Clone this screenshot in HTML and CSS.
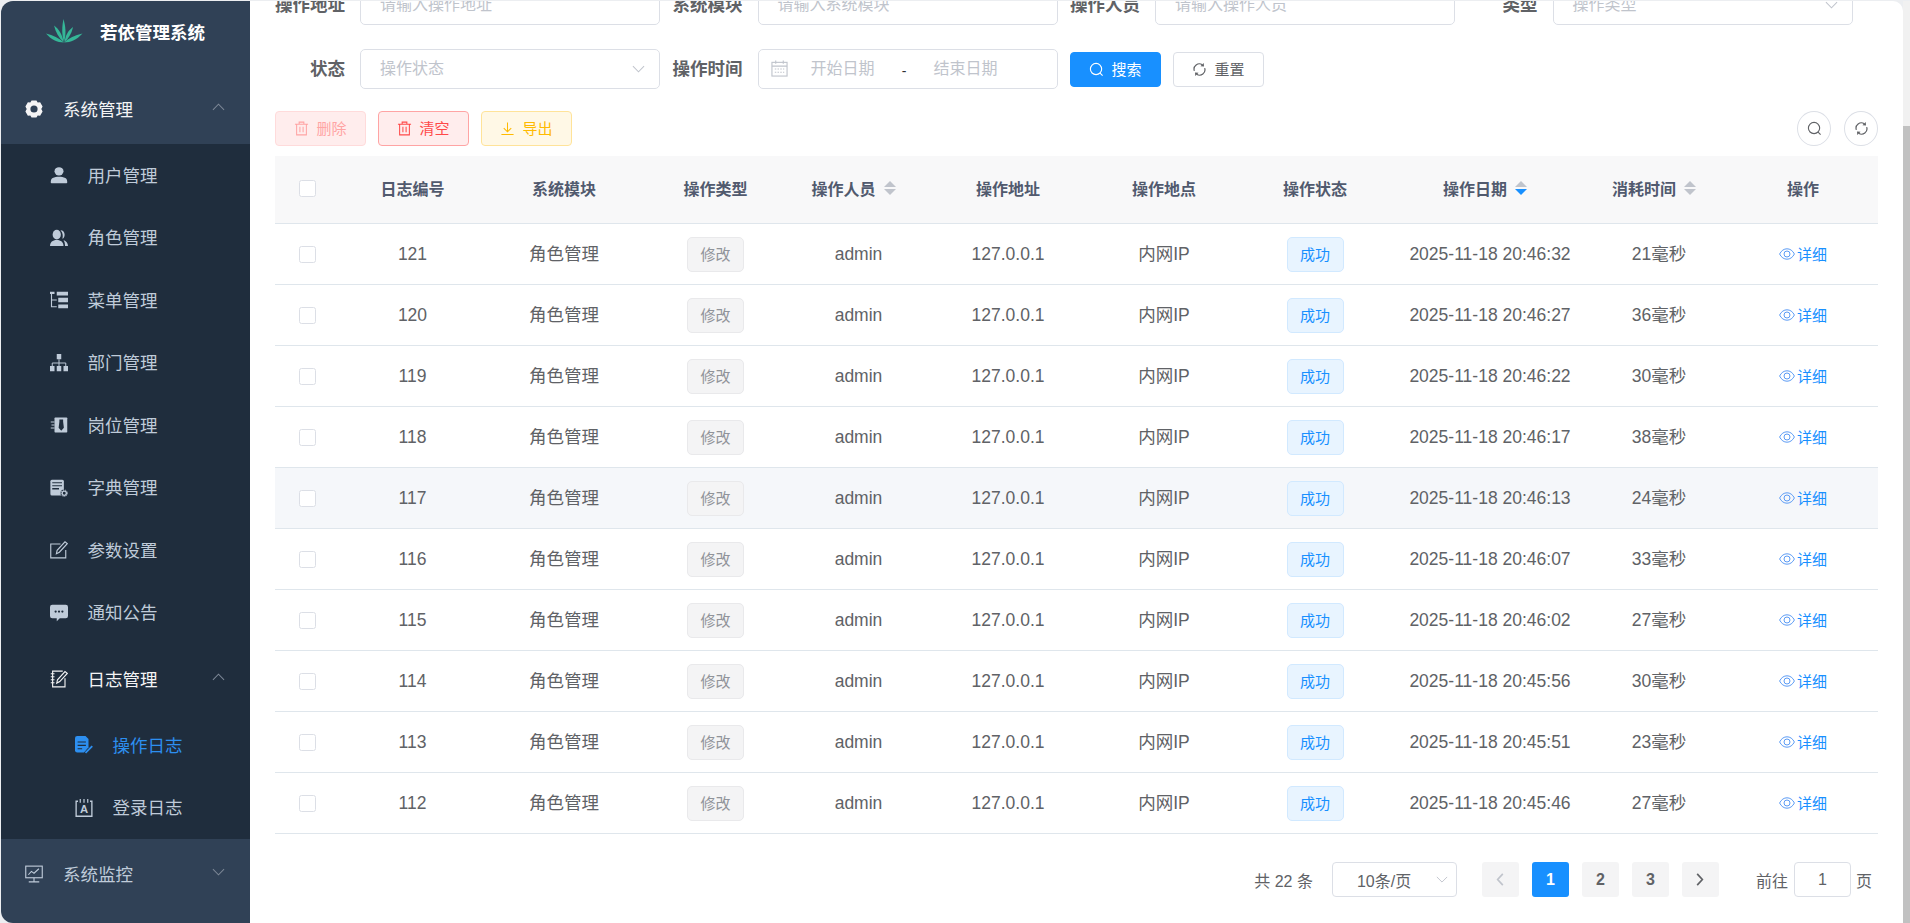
FILE: index.html
```html
<!DOCTYPE html>
<html lang="zh-CN">
<head>
<meta charset="utf-8">
<title>操作日志</title>
<link rel="stylesheet" href="styles.css">
</head>
<body>
<svg class="defs" aria-hidden="true">
  <symbol id="i-gear" viewBox="1 1 22 22"><path fill="currentColor" fill-rule="evenodd" d="M9 1.500h6l1.500 2.600 3-.2 3 5.100-1.600 3 1.600 3-3 5.100-3-.2L15 22.500H9l-1.500-2.600-3 .2-3-5.100 1.600-3-1.600-3 3-5.100 3 .2zM12 7.600a4.400 4.400 0 1 0 0 8.800a4.400 4.400 0 0 0 0-8.800z"/></symbol>
  <symbol id="i-user" viewBox="0 0 24 24"><g fill="currentColor"><ellipse cx="12" cy="7" rx="6" ry="5.500"/><path d="M1 22c0-3 .5-5 2.500-6 2.500-1.300 5.500-1.800 8.500-1.800s6 .5 8.500 1.800c2 1 2.500 3 2.500 6 0 .5-.5 1-1 1H2c-.5 0-1-.5-1-1z"/></g></symbol>
  <symbol id="i-peoples" viewBox="0 0 24 24"><g fill="currentColor"><ellipse cx="9" cy="7.500" rx="5.500" ry="6.500"/><path d="M0 22.500c0-5 3.500-8 9-8s9 3 9 8z"/><path d="M14 1.500c3.500 0 5.500 2.700 5.500 6 0 2.500-1 4.500-3 5.500 1-3.500.8-8.500-2.500-11.500zM18 14.500c3.500 1.500 6 3.800 6 8h-4c0-3-.5-5.500-2-8z"/></g></symbol>
  <symbol id="i-treetable" viewBox="0 0 24 24"><g fill="currentColor"><rect x="0" y="1" width="6" height="3"/><rect x="9" y="1" width="15" height="5"/><rect x="11" y="9" width="13" height="6"/><rect x="11" y="18" width="13" height="5"/></g><path d="M2 4v17h7M2 12h7" fill="none" stroke="currentColor" stroke-width="1.500"/></symbol>
  <symbol id="i-tree" viewBox="0 0 24 24"><g fill="currentColor"><rect x="9" y="0" width="6" height="7"/><rect x="0" y="16" width="6" height="7"/><rect x="9" y="16" width="6" height="7"/><rect x="18" y="16" width="6" height="7"/></g><path d="M12 7v9M3 16v-4h18v4" fill="none" stroke="currentColor" stroke-width="1.300"/></symbol>
  <symbol id="i-post" viewBox="0 0 24 24"><rect x="6" y="2" width="17" height="20" rx="1" fill="currentColor"/><path d="M12.500 4.500h5v3l1 8-3.500 4-3.500-4 1-8z" fill="#1f2d3d"/><path d="M1 8h5M2 12h4M1 16h5" stroke="currentColor" stroke-width="1.500"/></symbol>
  <symbol id="i-dict" viewBox="0 0 24 24"><rect x="0.500" y="1" width="18" height="21" rx="2" fill="currentColor"/><path d="M3 5h13M3 9h13" stroke="#1f2d3d" stroke-width="1.300"/><path d="M3 13h9" stroke="#1f2d3d" stroke-width="2"/><circle cx="19" cy="19" r="5" fill="#1f2d3d"/><circle cx="19" cy="19" r="2.800" fill="none" stroke="currentColor" stroke-width="1.800"/><circle cx="19" cy="19" r="4.300" fill="none" stroke="currentColor" stroke-width="1.300" stroke-dasharray="1.500 1.500"/></symbol>
  <symbol id="i-edit" viewBox="0 0 24 24"><path d="M21 12v10.500H1V4h13" fill="none" stroke="currentColor" stroke-width="1.500"/><path d="M8.500 17l1-4.500L20 1l3 2.500-10.500 11.500z" fill="none" stroke="currentColor" stroke-width="1.500"/></symbol>
  <symbol id="i-message" viewBox="0 0 24 24"><path fill="currentColor" d="M3 1h18a3 3 0 0 1 3 3v12a3 3 0 0 1-3 3h-8l-4 4v-4H3a3 3 0 0 1-3-3V4a3 3 0 0 1 3-3z"/><g fill="#1f2d3d"><circle cx="7.500" cy="10" r="1.500"/><circle cx="12" cy="10" r="1.500"/><circle cx="16.500" cy="10" r="1.500"/></g></symbol>
  <symbol id="i-log" viewBox="0 0 24 24"><path d="M20 11v11.500H3.500V1.500H17" fill="none" stroke="currentColor" stroke-width="1.500"/><path d="M1 5h5M1 9h5M1 13h5M1 17h5" stroke="currentColor" stroke-width="1.300"/><path d="M9 17.500l1-4.500L20 2l3 2.500L13 15.500z" fill="none" stroke="currentColor" stroke-width="1.500"/></symbol>
  <symbol id="i-form" viewBox="0 0 24 24"><path fill="currentColor" d="M3 0h11l4 4v11l-6 7H3a3 3 0 0 1-3-3V3a3 3 0 0 1 3-3z"/><path d="M3.500 8h11M3.500 12.500h11M3.500 17h6" stroke="#1f2d3d" stroke-width="1.600"/><path d="M14 22.500l9-9" stroke="currentColor" stroke-width="2.400"/></symbol>
  <symbol id="i-login" viewBox="0 0 24 24"><path d="M4 3H1.500v20h21V3H20" fill="none" stroke="currentColor" stroke-width="1.800"/><path d="M7 0v5M12 0v5M17 0v5" stroke="currentColor" stroke-width="1.600"/><text x="12" y="19" text-anchor="middle" font-size="15" font-weight="700" font-family="Liberation Sans" fill="currentColor">A</text></symbol>
  <symbol id="i-monitor" viewBox="0 0 24 24"><rect x="1" y="1.500" width="22" height="15.500" fill="none" stroke="currentColor" stroke-width="1.500"/><path d="M4.500 13l4-4.500 3.500 2.500 6.500-6" fill="none" stroke="currentColor" stroke-width="1.400"/><path d="M12 17v5M5 22.500h14" stroke="currentColor" stroke-width="1.500"/></symbol>
  <symbol id="i-up" viewBox="0 0 14 8"><path d="M1 7l6-6 6 6" fill="none" stroke="currentColor" stroke-width="1.100"/></symbol>
  <symbol id="i-down" viewBox="0 0 14 8"><path d="M1 1l6 6 6-6" fill="none" stroke="currentColor" stroke-width="1.100"/></symbol>
  <symbol id="i-search" viewBox="0 0 16 16"><circle cx="7.500" cy="7.500" r="6" fill="none" stroke="currentColor" stroke-width="1.200"/><path d="M11.800 11.800l2.700 2.700" stroke="currentColor" stroke-width="1.200"/></symbol>
  <symbol id="i-refresh" viewBox="0 0 16 16"><g fill="none" stroke="currentColor" stroke-width="1.300"><path d="M2.500 9.500A5.700 5.700 0 0 1 11 2.900"/><path d="M13.500 6.500A5.700 5.700 0 0 1 5 13.100"/></g><path d="M12.500 1l.3 3.800-3.800-.2zM3.500 15l-.3-3.800 3.800.2z" fill="currentColor"/></symbol>
  <symbol id="i-trash" viewBox="0 0 16 16"><g fill="none" stroke="currentColor" stroke-width="1.100"><path d="M1 3.500h14M5.500 3.500V1.200h5v2.300M2.800 3.500v11.300h10.400V3.500M6.300 6v6M9.700 6v6"/></g></symbol>
  <symbol id="i-download" viewBox="0 0 16 16"><path d="M1.500 14.500h13M8 1.500v9.500M4 7.500l4 4 4-4" fill="none" stroke="currentColor" stroke-width="1.100"/></symbol>
  <symbol id="i-calendar" viewBox="0 0 18 18"><g fill="none" stroke="currentColor" stroke-width="1.200"><rect x="1" y="2.500" width="16" height="14.500"/><path d="M1 6.500h16M5 0.500v3.500M13 0.500v3.500"/></g><path d="M4 9.500h10M4 13h10" stroke="currentColor" stroke-width="1.200" stroke-dasharray="1.600 1.300"/></symbol>
  <symbol id="i-eye" viewBox="0 0 16 14"><g fill="none" stroke="currentColor" stroke-width="1"><path d="M.6 7C2.400 3.500 5 1.800 8 1.800S13.600 3.500 15.400 7c-1.800 3.500-4.400 5.200-7.400 5.200S2.400 10.500.6 7z"/><circle cx="8" cy="7" r="3"/></g></symbol>
  <symbol id="i-left" viewBox="0 0 10 16"><path d="M8 2L2.500 8 8 14" fill="none" stroke="currentColor" stroke-width="1.800"/></symbol>
  <symbol id="i-right" viewBox="0 0 10 16"><path d="M2 2l5.500 6L2 14" fill="none" stroke="currentColor" stroke-width="1.800"/></symbol>
  <symbol id="i-logo" viewBox="0 0 37 24"><g fill="#35b697"><path d="M18 23C15.500 15 16 7 17.500 0c2 7 3 15 .5 23z"/><path d="M17.500 23C13 19 9.500 13 8 6.500 13 10 16.500 16 17.500 23z"/><path d="M18.500 23c3.500-3 7-8 8.500-15-5 3.500-7.500 8.500-8.500 15z"/><path d="M18 23.500C11 23.500 5 20.500 0 14.500c7 2 13 4.500 18 9z"/><path d="M18 23.500c7 0 13-3 18.500-9-7.500 2-14 4.500-18.500 9z"/></g></symbol>
</svg>

<div class="app">
  <aside class="sidebar">
    <div class="logo">
      <svg class="logo-icon"><use href="#i-logo"/></svg>
      <span class="logo-text">若依管理系统</span>
    </div>
    <nav class="menu">
      <div class="menu-item top open"><svg class="mi"><use href="#i-gear"/></svg><span>系统管理</span><svg class="arrow"><use href="#i-up"/></svg></div>
      <div class="submenu">
        <div class="menu-item"><svg class="mi"><use href="#i-user"/></svg><span>用户管理</span></div>
        <div class="menu-item"><svg class="mi"><use href="#i-peoples"/></svg><span>角色管理</span></div>
        <div class="menu-item"><svg class="mi"><use href="#i-treetable"/></svg><span>菜单管理</span></div>
        <div class="menu-item"><svg class="mi"><use href="#i-tree"/></svg><span>部门管理</span></div>
        <div class="menu-item"><svg class="mi"><use href="#i-post"/></svg><span>岗位管理</span></div>
        <div class="menu-item"><svg class="mi"><use href="#i-dict"/></svg><span>字典管理</span></div>
        <div class="menu-item"><svg class="mi"><use href="#i-edit"/></svg><span>参数设置</span></div>
        <div class="menu-item"><svg class="mi"><use href="#i-message"/></svg><span>通知公告</span></div>
        <div class="menu-item tall open"><svg class="mi"><use href="#i-log"/></svg><span>日志管理</span><svg class="arrow"><use href="#i-up"/></svg></div>
        <div class="menu-item deep active"><svg class="mi"><use href="#i-form"/></svg><span>操作日志</span></div>
        <div class="menu-item deep"><svg class="mi"><use href="#i-login"/></svg><span>登录日志</span></div>
      </div>
      <div class="menu-item top"><svg class="mi"><use href="#i-monitor"/></svg><span>系统监控</span><svg class="arrow"><use href="#i-down"/></svg></div>
    </nav>
  </aside>

  <main class="main">
    <form class="query">
      <div class="query-row clipped">
        <div class="field"><label class="field-label">操作地址</label><div class="input">请输入操作地址</div></div>
        <div class="field"><label class="field-label">系统模块</label><div class="input">请输入系统模块</div></div>
        <div class="field"><label class="field-label">操作人员</label><div class="input">请输入操作人员</div></div>
        <div class="field"><label class="field-label">类型</label><div class="input select">操作类型<svg class="select-arrow"><use href="#i-down"/></svg></div></div>
      </div>
      <div class="query-row">
        <div class="field"><label class="field-label">状态</label><div class="input select">操作状态<svg class="select-arrow"><use href="#i-down"/></svg></div></div>
        <div class="field"><label class="field-label">操作时间</label>
          <div class="input range">
            <svg class="cal"><use href="#i-calendar"/></svg>
            <span class="range-start">开始日期</span><span class="range-sep">-</span><span class="range-end">结束日期</span>
          </div>
        </div>
        <div class="query-actions">
          <button type="button" class="btn primary"><svg class="bi"><use href="#i-search"/></svg><span>搜索</span></button>
          <button type="button" class="btn plain"><svg class="bi"><use href="#i-refresh"/></svg><span>重置</span></button>
        </div>
      </div>
    </form>

    <div class="toolbar">
      <button type="button" class="btn danger-off"><svg class="bi"><use href="#i-trash"/></svg><span>删除</span></button>
      <button type="button" class="btn danger"><svg class="bi"><use href="#i-trash"/></svg><span>清空</span></button>
      <button type="button" class="btn warning"><svg class="bi"><use href="#i-download"/></svg><span>导出</span></button>
      <div class="tools">
        <button type="button" class="circle"><svg class="ci"><use href="#i-search"/></svg></button>
        <button type="button" class="circle"><svg class="ci"><use href="#i-refresh"/></svg></button>
      </div>
    </div>

    <table class="grid">
      <colgroup>
        <col class="c1"><col class="c2"><col class="c3"><col class="c4"><col class="c5"><col class="c6"><col class="c7"><col class="c8"><col class="c9"><col class="c10"><col class="c11">
      </colgroup>
      <thead>
        <tr>
          <th><span class="check"></span></th>
          <th>日志编号</th>
          <th>系统模块</th>
          <th>操作类型</th>
          <th><span class="sortable">操作人员<span class="caret"><i class="up"></i><i class="dn"></i></span></span></th>
          <th>操作地址</th>
          <th>操作地点</th>
          <th>操作状态</th>
          <th><span class="sortable">操作日期<span class="caret"><i class="up"></i><i class="dn on"></i></span></span></th>
          <th><span class="sortable">消耗时间<span class="caret"><i class="up"></i><i class="dn"></i></span></span></th>
          <th>操作</th>
        </tr>
      </thead>
      <tbody>
        <tr><td><span class="check"></span></td><td>121</td><td>角色管理</td><td><span class="tag gray">修改</span></td><td>admin</td><td>127.0.0.1</td><td>内网IP</td><td><span class="tag blue">成功</span></td><td>2025-11-18 20:46:32</td><td>21毫秒</td><td><a class="detail"><svg class="eye"><use href="#i-eye"/></svg>详细</a></td></tr>
        <tr><td><span class="check"></span></td><td>120</td><td>角色管理</td><td><span class="tag gray">修改</span></td><td>admin</td><td>127.0.0.1</td><td>内网IP</td><td><span class="tag blue">成功</span></td><td>2025-11-18 20:46:27</td><td>36毫秒</td><td><a class="detail"><svg class="eye"><use href="#i-eye"/></svg>详细</a></td></tr>
        <tr><td><span class="check"></span></td><td>119</td><td>角色管理</td><td><span class="tag gray">修改</span></td><td>admin</td><td>127.0.0.1</td><td>内网IP</td><td><span class="tag blue">成功</span></td><td>2025-11-18 20:46:22</td><td>30毫秒</td><td><a class="detail"><svg class="eye"><use href="#i-eye"/></svg>详细</a></td></tr>
        <tr><td><span class="check"></span></td><td>118</td><td>角色管理</td><td><span class="tag gray">修改</span></td><td>admin</td><td>127.0.0.1</td><td>内网IP</td><td><span class="tag blue">成功</span></td><td>2025-11-18 20:46:17</td><td>38毫秒</td><td><a class="detail"><svg class="eye"><use href="#i-eye"/></svg>详细</a></td></tr>
        <tr class="hover"><td><span class="check"></span></td><td>117</td><td>角色管理</td><td><span class="tag gray">修改</span></td><td>admin</td><td>127.0.0.1</td><td>内网IP</td><td><span class="tag blue">成功</span></td><td>2025-11-18 20:46:13</td><td>24毫秒</td><td><a class="detail"><svg class="eye"><use href="#i-eye"/></svg>详细</a></td></tr>
        <tr><td><span class="check"></span></td><td>116</td><td>角色管理</td><td><span class="tag gray">修改</span></td><td>admin</td><td>127.0.0.1</td><td>内网IP</td><td><span class="tag blue">成功</span></td><td>2025-11-18 20:46:07</td><td>33毫秒</td><td><a class="detail"><svg class="eye"><use href="#i-eye"/></svg>详细</a></td></tr>
        <tr><td><span class="check"></span></td><td>115</td><td>角色管理</td><td><span class="tag gray">修改</span></td><td>admin</td><td>127.0.0.1</td><td>内网IP</td><td><span class="tag blue">成功</span></td><td>2025-11-18 20:46:02</td><td>27毫秒</td><td><a class="detail"><svg class="eye"><use href="#i-eye"/></svg>详细</a></td></tr>
        <tr><td><span class="check"></span></td><td>114</td><td>角色管理</td><td><span class="tag gray">修改</span></td><td>admin</td><td>127.0.0.1</td><td>内网IP</td><td><span class="tag blue">成功</span></td><td>2025-11-18 20:45:56</td><td>30毫秒</td><td><a class="detail"><svg class="eye"><use href="#i-eye"/></svg>详细</a></td></tr>
        <tr><td><span class="check"></span></td><td>113</td><td>角色管理</td><td><span class="tag gray">修改</span></td><td>admin</td><td>127.0.0.1</td><td>内网IP</td><td><span class="tag blue">成功</span></td><td>2025-11-18 20:45:51</td><td>23毫秒</td><td><a class="detail"><svg class="eye"><use href="#i-eye"/></svg>详细</a></td></tr>
        <tr><td><span class="check"></span></td><td>112</td><td>角色管理</td><td><span class="tag gray">修改</span></td><td>admin</td><td>127.0.0.1</td><td>内网IP</td><td><span class="tag blue">成功</span></td><td>2025-11-18 20:45:46</td><td>27毫秒</td><td><a class="detail"><svg class="eye"><use href="#i-eye"/></svg>详细</a></td></tr>
      </tbody>
    </table>

    <div class="pager">
      <span class="total">共 22 条</span>
      <div class="size">10条/页<svg class="size-arrow"><use href="#i-down"/></svg></div>
      <div class="pages">
        <span class="page off"><svg class="chev"><use href="#i-left"/></svg></span>
        <span class="page current">1</span>
        <span class="page">2</span>
        <span class="page">3</span>
        <span class="page"><svg class="chev"><use href="#i-right"/></svg></span>
      </div>
      <span class="goto">前往</span>
      <div class="goto-input">1</div>
      <span>页</span>
    </div>
  </main>

  <div class="scrollbar"><div class="thumb"></div></div>
</div>
</body>
</html>
```

FILE: styles.css
```css
* { box-sizing: border-box; }
html, body { margin: 0; height: 100%; overflow: hidden; }
body {
  font-family: "Liberation Sans", "Noto Sans CJK SC", sans-serif;
  font-size: 17.5px;
  color: #606266;
  background: #eceef1;
}
.defs { display: none; }
.app { display: flex; height: 923px; padding: 1px 0 0 1px; }

/* Sidebar */
.sidebar {
  width: 249px;
  flex: none;
  background: #304156;
  border-radius: 12px 0 0 12px;
  overflow: hidden;
}
.logo { height: 73px; padding-bottom: 10px; display: flex; align-items: center; justify-content: center; gap: 17px; }
.logo-icon { width: 37px; height: 24px; margin-bottom: 3px; }
.logo-text { color: #fff; font-weight: 700; font-size: 17.5px; padding-bottom: 2px; }
.menu-item { height: 62.5px; display: flex; align-items: center; padding-left: 49px; color: #bfcbd9; }
.menu-item span { padding-bottom: 2px; }
.menu-item.top { height: 70px; padding-left: 24px; }
.menu-item.tall { height: 70px; }
.menu-item.deep { padding-left: 74px; }
.menu-item.open { color: #f4f4f5; }
.menu-item.active { color: #2d8ff0; }
.mi { width: 18px; height: 18px; margin-right: 19.5px; flex: none; }
.top .mi { margin-right: 20px; }
.arrow { width: 13px; height: 8px; margin-left: auto; margin-right: 25px; margin-bottom: 4px; color: #7c8796; }
.submenu { background: #1f2d3d; }

/* Main */
.main { flex: 1; min-width: 0; background: #fff; border-radius: 0 10px 0 0; padding: 0 25px; overflow: hidden; }
.query-row { display: flex; gap: 12.5px; height: 40px; margin-bottom: 24px; align-items: center; }
.query-row.clipped { margin-top: -16px; }
.field { display: flex; align-items: center; }
.field-label { width: 85px; padding: 0 15px 3px 0; text-align: right; font-weight: 700; color: #606266; font-size: 17.5px; flex: none; }
.input {
  width: 300px; height: 40px; border: 1px solid #dcdfe6; border-radius: 5px;
  padding: 0 19px; color: #c0c4cc; font-size: 16px; line-height: 38px; display: flex; align-items: center; background: #fff;
}
.select { justify-content: space-between; padding-right: 14px; }
.select-arrow { width: 13px; height: 8px; color: #c0c4cc; }
.range { padding: 0 0 0 12px; }
.cal { width: 17px; height: 17px; color: #c0c4cc; flex: none; margin-right: 23px; margin-bottom: 1px; }
.range-sep { color: #303133; width: 59px; text-align: center; font-size: 14px; padding-top: 3px; }
.range-start, .range-end { width: 64px; flex: none; }
.query-actions { display: flex; gap: 12px; }

.btn {
  height: 35px; width: 91px; border: 1px solid #dcdfe6; border-radius: 4px; background: #fff;
  font: inherit; font-size: 15px; display: inline-flex; align-items: center; justify-content: center; gap: 7px; padding: 0;
  color: #606266;
}
.btn span { padding-bottom: 2px; }
.bi { width: 15px; height: 15px; flex: none; }
.primary { background: #1890ff; border-color: #1890ff; color: #fff; }
.danger-off { background: #ffeded; border-color: #ffdbdb; color: #ffa4a4; }
.danger { background: #ffeded; border-color: #ffa4a4; color: #ff4949; }
.warning { background: #fff8e6; border-color: #ffe399; color: #ffba00; }

.toolbar { display: flex; gap: 12px; height: 35px; margin-bottom: 10px; margin-top: -2px; }
.tools { margin-left: auto; display: flex; gap: 13px; }
.circle { width: 34px; height: 35px; border: 1px solid #dcdfe6; border-radius: 50%; background: #fff; padding: 0; display: flex; align-items: center; justify-content: center; color: #606266; }
.ci { width: 15px; height: 15px; }

/* Table */
.grid { width: 1603px; border-collapse: separate; border-spacing: 0; table-layout: fixed; }
.c1 { width: 64px; } .c2 { width: 147px; } .c3 { width: 156px; } .c4 { width: 147px; }
.c5 { width: 139px; } .c6 { width: 160px; } .c7 { width: 152px; } .c8 { width: 150px; }
.c9 { width: 200px; } .c10 { width: 138px; } .c11 { width: 150px; }
.grid th, .grid td { padding: 0; text-align: center; border-bottom: 1px solid #dfe6ec; white-space: nowrap; }
.grid th { height: 68px; padding-bottom: 3px; background: #f8f8f9; color: #515a6e; font-size: 16px; font-weight: 700; }
.grid th:first-child { padding-bottom: 2px; }
.grid td { height: 61px; }
.grid td:nth-child(3), .grid td:nth-child(7), .grid td:nth-child(10) { padding-bottom: 3px; }
.grid tr.hover td { background: #f5f7fa; }
.check { display: block; margin: 0 auto; width: 17px; height: 17px; border: 1px solid #dcdfe6; border-radius: 2.5px; background: #fff; }
.sortable { display: inline-flex; align-items: center; gap: 8px; padding: 0 10px 1px 0; }
.caret { display: inline-flex; flex-direction: column; gap: 2px; }
.caret i { display: block; width: 0; height: 0; border-left: 6px solid transparent; border-right: 6px solid transparent; }
.caret .up { border-bottom: 6.5px solid #c0c4cc; }
.caret .dn { border-top: 6.5px solid #c0c4cc; }
.caret .dn.on { border-top-color: #1890ff; }
.tag { display: inline-flex; align-items: center; justify-content: center; width: 57px; height: 35px; padding-bottom: 2px; border-radius: 5px; border: 1px solid; font-size: 15px; vertical-align: middle; }
.gray { background: #f4f4f5; border-color: #e9e9eb; color: #909399; }
.blue { background: #e8f4ff; border-color: #d1e9ff; color: #1890ff; }
.detail { color: #1890ff; font-size: 15px; display: inline-flex; align-items: center; gap: 2px; }
.eye { width: 16px; height: 14px; color: #5b9bf5; margin-top: 1px; }

/* Pagination */
.pager { display: flex; align-items: center; justify-content: flex-end; height: 35px; margin-top: 28px; padding-right: 6px; width: 1603px; font-size: 16px; }
.total { margin-right: 19px; }
.size { width: 125px; height: 35px; border: 1px solid #dcdfe6; border-radius: 4px; display: flex; align-items: center; justify-content: space-between; padding: 0 8px 0 24px; }
.size-arrow { width: 12px; height: 7px; color: #c0c4cc; }
.pages { display: flex; gap: 13px; margin-left: 25px; }
.page { width: 37px; height: 35px; background: #f4f4f5; border-radius: 3px; display: flex; align-items: center; justify-content: center; font-weight: 700; font-size: 16px; color: #606266; }
.page.current { background: #1890ff; color: #fff; }
.page.off { color: #c0c4cc; }
.chev { width: 10px; height: 15px; }
.goto { margin-left: 37px; margin-right: 6px; }
.goto-input { width: 57px; height: 35px; border: 1px solid #dcdfe6; border-radius: 4px; display: flex; align-items: center; justify-content: center; margin-right: 5px; }

/* Scrollbar */
.scrollbar { width: 7px; flex: none; background: #f1f1f1; padding-top: 125px; }
.thumb { height: 100%; background: #c1c1c1; }
```
